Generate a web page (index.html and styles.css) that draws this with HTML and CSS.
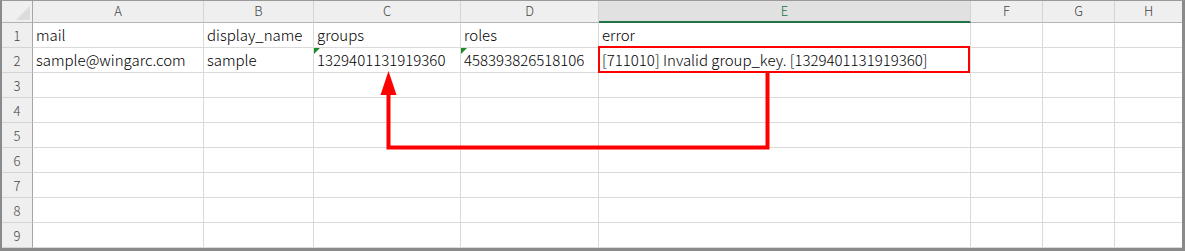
FILE: index.html
```html
<!DOCTYPE html>
<html lang="ja">
<head>
<meta charset="utf-8">
<link rel="stylesheet" href="styles.css">
</head>
<body>
<div class="sheet">
  <div class="grid">
    <div class="corner"><span class="corner-tri"></span></div>
    <div class="ch">A</div>
    <div class="ch">B</div>
    <div class="ch">C</div>
    <div class="ch">D</div>
    <div class="ch ch-sel">E</div>
    <div class="ch">F</div>
    <div class="ch">G</div>
    <div class="ch ch-last">H</div>

    <div class="rh">1</div>
    <div class="c">mail</div>
    <div class="c">display_name</div>
    <div class="c">groups</div>
    <div class="c">roles</div>
    <div class="c">error</div>
    <div class="c"></div>
    <div class="c"></div>
    <div class="c c-last"></div>

    <div class="rh">2</div>
    <div class="c">sample@wingarc.com</div>
    <div class="c">sample</div>
    <div class="c c-txtnum">1329401131919360</div>
    <div class="c c-txtnum">458393826518106</div>
    <div class="c">[711010] Invalid group_key. [1329401131919360]</div>
    <div class="c"></div>
    <div class="c"></div>
    <div class="c c-last"></div>

    <div class="rh">3</div><div class="c"></div><div class="c"></div><div class="c"></div><div class="c"></div><div class="c"></div><div class="c"></div><div class="c"></div><div class="c c-last"></div>
    <div class="rh">4</div><div class="c"></div><div class="c"></div><div class="c"></div><div class="c"></div><div class="c"></div><div class="c"></div><div class="c"></div><div class="c c-last"></div>
    <div class="rh">5</div><div class="c"></div><div class="c"></div><div class="c"></div><div class="c"></div><div class="c"></div><div class="c"></div><div class="c"></div><div class="c c-last"></div>
    <div class="rh">6</div><div class="c"></div><div class="c"></div><div class="c"></div><div class="c"></div><div class="c"></div><div class="c"></div><div class="c"></div><div class="c c-last"></div>
    <div class="rh">7</div><div class="c"></div><div class="c"></div><div class="c"></div><div class="c"></div><div class="c"></div><div class="c"></div><div class="c"></div><div class="c c-last"></div>
    <div class="rh">8</div><div class="c"></div><div class="c"></div><div class="c"></div><div class="c"></div><div class="c"></div><div class="c"></div><div class="c"></div><div class="c c-last"></div>
    <div class="rh">9</div><div class="c"></div><div class="c"></div><div class="c"></div><div class="c"></div><div class="c"></div><div class="c"></div><div class="c"></div><div class="c c-last"></div>
  </div>

  <svg class="overlay" width="1185" height="251" viewBox="0 0 1185 251" aria-hidden="true">
    <rect x="599" y="47" width="370" height="25" fill="none" stroke="#ff0000" stroke-width="2"/>
    <path d="M767.5 73 V147.5 H388.5 V92" fill="none" stroke="#ff0000" stroke-width="4"/>
    <polygon points="388.5,71 380.5,95 396.5,95" fill="#ff0000"/>
  </svg>
</div>
</body>
</html>
```

FILE: styles.css
```css
html, body {
  margin: 0;
  padding: 0;
  background: #ffffff;
}

.sheet {
  position: relative;
  width: 1185px;
  height: 251px;
  box-sizing: border-box;
  border-top: 1px solid #9a9a9a;
  border-left: 2px solid #8a8a8a;
  border-right: 3px solid #8a8a8a;
  border-bottom: 3px solid #8a8a8a;
  overflow: hidden;
  font-family: "Noto Sans CJK JP", "Noto Sans", sans-serif;
}

.grid {
  display: grid;
  grid-template-columns: 31px 171px 110px 147px 138px 372px 72px 72px 67px;
  grid-template-rows: 22px repeat(9, 25px);
}

.grid > div {
  box-sizing: border-box;
  border-right: 1px solid #dadada;
  border-bottom: 1px solid #dadada;
}

.corner {
  position: relative;
  background: #efefef;
  border-right-color: #a6a6a6 !important;
  border-bottom-color: #b4b4b4 !important;
}

.corner-tri {
  position: absolute;
  right: 2px;
  bottom: 2px;
  width: 0;
  height: 0;
  border-left: 14px solid transparent;
  border-bottom: 14px solid #dcdcdc;
}

.ch {
  background: #efefef;
  color: #444444;
  font-size: 13px;
  font-weight: 300;
  display: flex;
  align-items: center;
  justify-content: center;
  line-height: 1;
  padding-bottom: 2px;
  border-right-color: #d4d4d4 !important;
  border-bottom-color: #b4b4b4 !important;
}

.ch-sel {
  background: #e1e1e1;
  color: #217346;
  border-bottom: 2px solid #217346 !important;
  padding-bottom: 1px;
}

.ch-last,
.c-last {
  border-right: none !important;
}

.rh {
  background: #efefef;
  color: #444444;
  font-size: 13px;
  font-weight: 300;
  display: flex;
  align-items: center;
  justify-content: center;
  line-height: 1;
  border-right-color: #a6a6a6 !important;
  border-bottom-color: #d4d4d4 !important;
}

.c {
  position: relative;
  display: flex;
  align-items: center;
  padding: 0 0 2px 3px;
  font-size: 15px;
  font-weight: 300;
  color: #000000;
  white-space: nowrap;
  line-height: 1;
}

.c-txtnum::before {
  content: "";
  position: absolute;
  left: 0;
  top: 0;
  width: 0;
  height: 0;
  border-top: 6px solid #1e8a2a;
  border-right: 6px solid transparent;
}

.overlay {
  position: absolute;
  left: -2px;
  top: -1px;
  pointer-events: none;
}
```
